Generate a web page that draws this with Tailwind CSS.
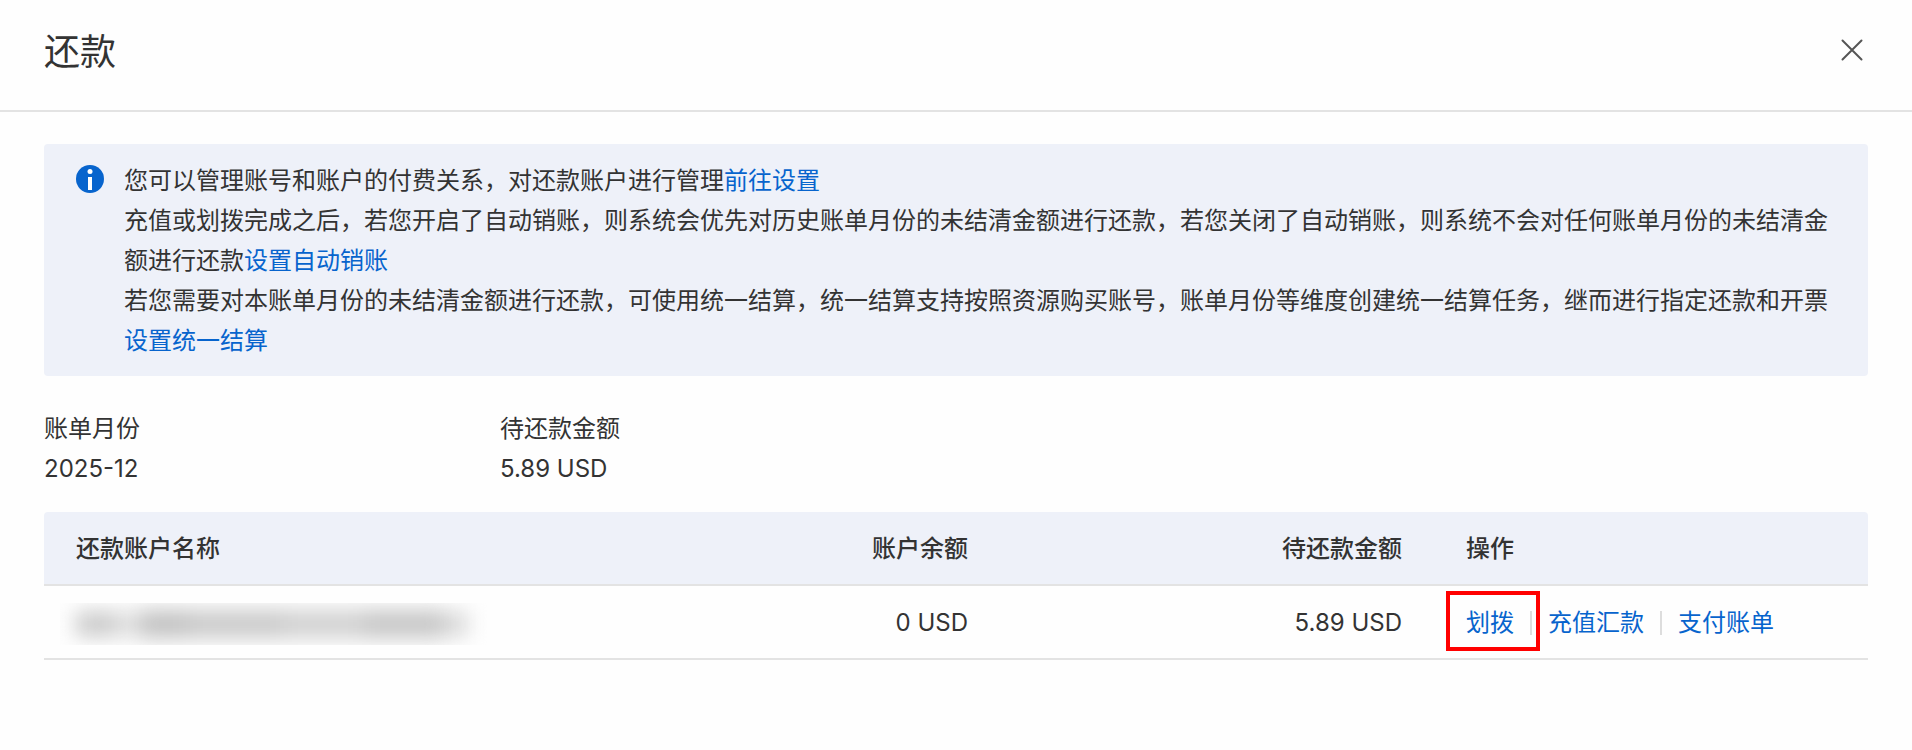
<!DOCTYPE html>
<html lang="zh-CN">
<head>
    <meta charset="UTF-8">
    <meta name="viewport" content="width=device-width, initial-scale=1.0">
    <title>还款</title>
    <script src="https://cdn.jsdelivr.net/npm/@tailwindcss/browser@4"></script>
</head>
<body class="bg-[#fefefe] font-['Inter','Noto_Sans_CJK_SC',sans-serif] text-2xl leading-10 text-[#333333]">
    <!-- Header -->
    <header class="flex items-start justify-between border-b-2 border-[#e3e3e3] px-11 pt-[25px] pb-[31px]">
        <h1 class="text-4xl leading-[54px]">还款</h1>
        <button type="button" aria-label="关闭" class="mt-[9px] p-1">
            <svg class="size-6" viewBox="0 0 24 24" fill="none" stroke="#555555" stroke-width="2" stroke-linecap="round">
                <path d="M2.5 2.5l19 19M21.5 2.5l-19 19"/>
            </svg>
        </button>
    </header>

    <main class="px-11 py-8">
        <!-- Notice -->
        <section class="flex items-start gap-5 rounded bg-[#eef1f9] px-8 pt-[17px] pb-[15px]">
            <svg class="mt-1 size-7 shrink-0" viewBox="0 0 28 28" aria-hidden="true">
                <circle cx="14" cy="14" r="14" fill="#0764cd"/>
                <circle cx="14" cy="6.5" r="2.5" fill="#fff"/>
                <path d="M12 12h4v13h-4z" fill="#fff"/>
            </svg>
            <div>
                <p>您可以管理账号和账户的付费关系，对还款账户进行管理<a href="#" class="text-[#0764cd]">前往设置</a></p>
                <p>充值或划拨完成之后，若您开启了自动销账，则系统会优先对历史账单月份的未结清金额进行还款，若您关闭了自动销账，则系统不会对任何账单月份的未结清金额进行还款<a href="#" class="text-[#0764cd]">设置自动销账</a></p>
                <p>若您需要对本账单月份的未结清金额进行还款，可使用统一结算，统一结算支持按照资源购买账号，账单月份等维度创建统一结算任务，继而进行指定还款和开票<a href="#" class="text-[#0764cd]">设置统一结算</a></p>
            </div>
        </section>

        <!-- Bill summary -->
        <dl class="grid grid-cols-4 pt-[33px] pb-[23px]">
            <div>
                <dt>账单月份</dt>
                <dd>2025-12</dd>
            </div>
            <div>
                <dt>待还款金额</dt>
                <dd>5.89 USD</dd>
            </div>
        </dl>

        <!-- Accounts -->
        <table class="w-full table-fixed border-separate border-spacing-0">
            <colgroup>
                <col class="w-[522px]">
                <col>
                <col>
                <col>
            </colgroup>
            <thead>
                <tr class="text-left">
                    <th scope="col" class="rounded-tl border-b-2 border-[#e3e3e3] bg-[#eef1f9] px-8 pt-[17px] pb-[15px] font-medium">还款账户名称</th>
                    <th scope="col" class="border-b-2 border-[#e3e3e3] bg-[#eef1f9] px-8 pt-[17px] pb-[15px] text-right font-medium">账户余额</th>
                    <th scope="col" class="border-b-2 border-[#e3e3e3] bg-[#eef1f9] px-8 pt-[17px] pb-[15px] text-right font-medium">待还款金额</th>
                    <th scope="col" class="rounded-tr border-b-2 border-[#e3e3e3] bg-[#eef1f9] px-8 pt-[17px] pb-[15px] font-medium">操作</th>
                </tr>
            </thead>
            <tbody>
                <tr>
                    <td class="border-b-2 border-[#e3e3e3] px-4 pt-1 pb-0">
                        <!-- Masked account name -->
                        <div class="flex h-[42px] items-center overflow-hidden px-4">
                            <div class="flex items-center blur-[10px]">
                                <span class="h-6 w-10 bg-[#c8c8c8]"></span>
                                <span class="h-6 w-6 bg-[#dedede]"></span>
                                <span class="h-7 w-12 bg-[#c2c2c2]"></span>
                                <span class="h-7 w-24 bg-[#cacaca]"></span>
                                <span class="h-7 w-20 bg-[#d1d1d1]"></span>
                                <span class="h-7 w-20 bg-[#c6c6c6]"></span>
                                <span class="h-6 w-6 bg-[#d8d8d8]"></span>
                            </div>
                        </div>
                    </td>
                    <td class="border-b-2 border-[#e3e3e3] px-8 pt-[17px] pb-[15px] text-right">0 USD</td>
                    <td class="border-b-2 border-[#e3e3e3] px-8 pt-[17px] pb-[15px] text-right">5.89 USD</td>
                    <td class="border-b-2 border-[#e3e3e3] px-8 pt-[17px] pb-[15px]">
                        <div class="flex items-center gap-4 whitespace-nowrap">
                            <div class="relative flex items-center gap-4">
                                <a href="#" class="text-[#0764cd]">划拨</a>
                                <span class="h-6 w-0.5 bg-[#dddddd]"></span>
                                <span class="pointer-events-none absolute -top-3 -right-2 -bottom-2 -left-5 border-4 border-[#ff0000]"></span>
                            </div>
                            <a href="#" class="text-[#0764cd]">充值汇款</a>
                            <span class="h-6 w-0.5 bg-[#dddddd]"></span>
                            <a href="#" class="text-[#0764cd]">支付账单</a>
                        </div>
                    </td>
                </tr>
            </tbody>
        </table>
    </main>
</body>
</html>
